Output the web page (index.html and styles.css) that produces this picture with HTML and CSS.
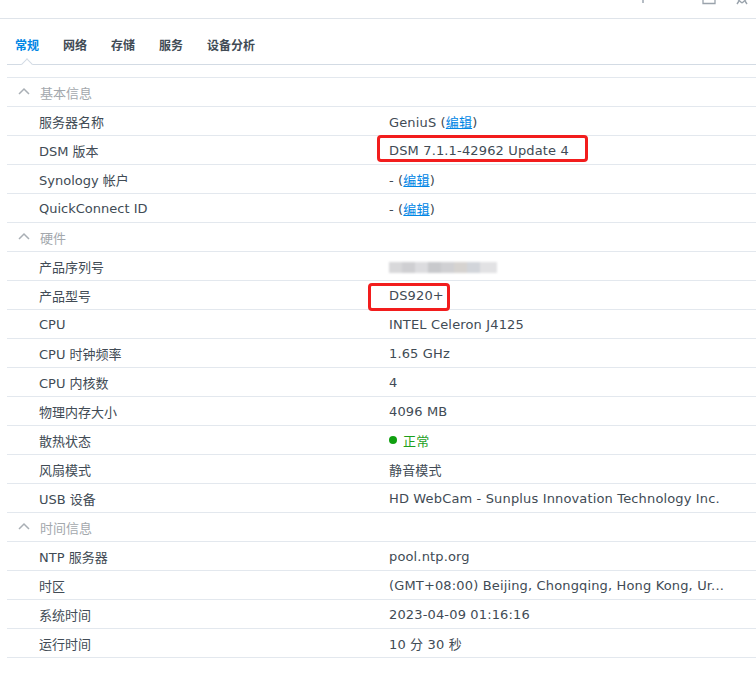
FILE: index.html
```html
<!DOCTYPE html>
<html lang="zh-CN">
<head>
  <meta charset="UTF-8" />
  <title>信息中心</title>
  <link rel="stylesheet" href="styles.css">
</head>
<body>

  <div class="title-bar">
    <svg class="tb-icon help" width="10" height="18" viewBox="0 0 10 18">
      <rect x="4" y="0" width="2" height="3" fill="#b5bcc4"/>
    </svg>
    <svg class="tb-icon max" width="14" height="18" viewBox="0 0 14 18">
      <path d="M1 -4 V3.5 H13 V-4" fill="none" stroke="#9aa3ac" stroke-width="1.3"/>
    </svg>
    <svg class="tb-icon close" width="12" height="18" viewBox="0 0 12 18">
      <path d="M-2 -4 L6 3 M14 -4 L6 3" fill="none" stroke="#9aa3ac" stroke-width="1.4"/>
      <path d="M3 1 L1 4 M9 1 L11 4" fill="none" stroke="#9aa3ac" stroke-width="1.4"/>
    </svg>
  </div>

  <div class="panel">
    <div class="tabs">
      <div class="tab active">常规</div>
      <div class="tab">网络</div>
      <div class="tab">存储</div>
      <div class="tab">服务</div>
      <div class="tab">设备分析</div>
    </div>

    <div class="info-table">
      <div class="group-row">
        <svg class="chevron" width="12" height="8" viewBox="0 0 12 8"><path d="M1 7 L6 2 L11 7" fill="none" stroke="#a9afb5" stroke-width="1.5"/></svg>
        基本信息
      </div>
      <div class="row"><div class="label">服务器名称</div><div class="value">GeniuS (<a href="#">编辑</a>)</div></div>
      <div class="row"><div class="label">DSM 版本</div><div class="value"><span class="mark mark-dsm"></span>DSM 7.1.1-42962 Update 4</div></div>
      <div class="row"><div class="label">Synology 帐户</div><div class="value">- (<a href="#">编辑</a>)</div></div>
      <div class="row"><div class="label">QuickConnect ID</div><div class="value">- (<a href="#">编辑</a>)</div></div>

      <div class="group-row">
        <svg class="chevron" width="12" height="8" viewBox="0 0 12 8"><path d="M1 7 L6 2 L11 7" fill="none" stroke="#a9afb5" stroke-width="1.5"/></svg>
        硬件
      </div>
      <div class="row"><div class="label">产品序列号</div><div class="value"><span class="blurred"></span></div></div>
      <div class="row"><div class="label">产品型号</div><div class="value"><span class="mark mark-model"></span>DS920+</div></div>
      <div class="row"><div class="label">CPU</div><div class="value">INTEL Celeron J4125</div></div>
      <div class="row"><div class="label">CPU 时钟频率</div><div class="value">1.65 GHz</div></div>
      <div class="row"><div class="label">CPU 内核数</div><div class="value">4</div></div>
      <div class="row"><div class="label">物理内存大小</div><div class="value">4096 MB</div></div>
      <div class="row"><div class="label">散热状态</div><div class="value status-ok"><span class="dot"></span>正常</div></div>
      <div class="row"><div class="label">风扇模式</div><div class="value">静音模式</div></div>
      <div class="row"><div class="label">USB 设备</div><div class="value">HD WebCam - Sunplus Innovation Technology Inc.</div></div>

      <div class="group-row">
        <svg class="chevron" width="12" height="8" viewBox="0 0 12 8"><path d="M1 7 L6 2 L11 7" fill="none" stroke="#a9afb5" stroke-width="1.5"/></svg>
        时间信息
      </div>
      <div class="row"><div class="label">NTP 服务器</div><div class="value">pool.ntp.org</div></div>
      <div class="row"><div class="label">时区</div><div class="value">(GMT+08:00) Beijing, Chongqing, Hong Kong, Ur...</div></div>
      <div class="row"><div class="label">系统时间</div><div class="value">2023-04-09 01:16:16</div></div>
      <div class="row"><div class="label">运行时间</div><div class="value">10 分 30 秒</div></div>
    </div>
  </div>

</body>
</html>
```

FILE: styles.css
```css
body {
  margin: 0;
  background: #fff;
  color: #414b55;
  font-family: "DejaVu Sans", "Noto Sans CJK SC", sans-serif;
  font-size: 13px;
  overflow: hidden;
}

.title-bar {
  display: flex;
  justify-content: flex-end;
  height: 18px;
  border-bottom: 1px solid #dfe4ea;
}

.tb-icon {
  display: block;
}

.tb-icon.help {
  margin-right: 54px;
}

.tb-icon.max {
  margin-right: 20px;
}

.tb-icon.close {
  margin-right: 8px;
}

.panel {
  margin-left: 7px;
}

.tabs {
  display: flex;
  gap: 24px;
  padding: 18px 0 9px 8px;
  border-bottom: 1px solid #d3dbe4;
}

.tab {
  position: relative;
  font-size: 12px;
  line-height: 18px;
  font-weight: bold;
  color: #414b55;
  cursor: pointer;
}

.tab.active {
  color: #0086e5;
}

.tab.active::after {
  content: "";
  position: absolute;
  left: 8px;
  bottom: -13px;
  width: 7px;
  height: 7px;
  background: #fff;
  border-top: 1px solid #d3dbe4;
  border-left: 1px solid #d3dbe4;
  transform: rotate(45deg);
}

.info-table {
  margin-top: 12px;
  border-top: 1px solid #e3e8ee;
}

.group-row {
  display: flex;
  align-items: center;
  height: 28px;
  padding-left: 11px;
  border-bottom: 1px solid #e3e8ee;
  color: #a3a8ad;
}

.chevron {
  margin-right: 10px;
  margin-top: -2px;
}

.row {
  display: grid;
  grid-template-columns: 350px 1fr;
  align-items: center;
  height: 28px;
  padding-left: 32px;
  border-bottom: 1px solid #e3e8ee;
}

.value {
  position: relative;
  white-space: nowrap;
  letter-spacing: 0.15px;
}

a {
  color: #0086e5;
  text-decoration: underline;
}

.status-ok {
  color: #1ca01c;
  display: flex;
  align-items: center;
}

.dot {
  width: 8px;
  height: 8px;
  border-radius: 50%;
  background: #10a010;
  margin-right: 6px;
}

.blurred {
  display: inline-block;
  width: 108px;
  height: 11px;
  vertical-align: middle;
  background: linear-gradient(to right, #d8d8da 0 12%, #cfcfd2 12% 24%, #dcdcdf 24% 36%, #c8c9cc 36% 48%, #d0d0d3 48% 60%, #d6d3d0 60% 72%, #d2d5da 72% 84%, #e2e2e4 84% 100%);
  filter: blur(0.8px);
}

.mark {
  position: absolute;
  border: 3px solid #f21d1d;
  border-radius: 4px;
  pointer-events: none;
}

.mark-dsm {
  left: -12px;
  top: -8px;
  width: 205px;
  height: 21px;
}

.mark-model {
  left: -21px;
  top: -5px;
  width: 76px;
  height: 22px;
}
```
